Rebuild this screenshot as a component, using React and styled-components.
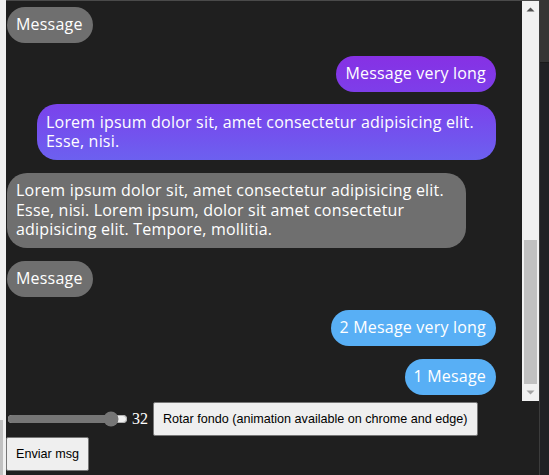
import React, { useState } from "react";
import styled, { createGlobalStyle, css } from "styled-components";

const GlobalStyle = createGlobalStyle`
  html, body { margin: 0; padding: 0; }
  body { background: #f0f0f0; overflow: hidden; }
`;

const Page = styled.div`
  display: flex;
  height: 475px;
  width: 549px;
`;

const LeftGutter = styled.div`
  flex: 0 0 6px;
  background: #f0f0f0;
  display: flex;
  flex-direction: column;
  justify-content: flex-end;
`;

const LeftGutterBar = styled.div`
  width: 3px;
  height: 55px;
  background: #c1c1c1;
`;

const Panel = styled.main`
  flex: 0 0 533px;
  display: flex;
  flex-direction: column;
  background: #1f1f1f;
  border-top: 1px solid #4a4a4a;
  box-sizing: border-box;
`;

const RightGutter = styled.div`
  flex: 1;
  display: flex;
  flex-direction: column;
  background: #202124;
  border-left: 1px solid #3c3c3c;
`;

const RightGutterTop = styled.div`
  height: 62px;
  background: #353535;
  border-bottom: 1px solid #1a1a1a;
`;

const ChatArea = styled.div`
  height: 400px;
  display: flex;
`;

const ChatList = styled.div`
  flex: 1;
  min-width: 0;
  overflow: hidden;
  display: flex;
  flex-direction: column-reverse;
  gap: 12.4px;
  padding: 7px 26px 6px 1px;
  box-sizing: border-box;
`;

const ScrollBar = styled.div`
  flex: 0 0 17px;
  display: flex;
  flex-direction: column;
  background: #f1f1f1;
`;

const ScrollArrow = styled.div`
  height: 17px;
  display: flex;
  align-items: center;
  justify-content: center;
  color: ${(p) => (p.$disabled ? "#a3a3a3" : "#505050")};
`;

const ScrollSpace = styled.div`
  flex: 1;
`;

const ScrollThumb = styled.div`
  height: 144px;
  margin: 0 2px;
  background: #c1c1c1;
`;

const Bubble = styled.div`
  flex: none;
  max-width: 459px;
  box-sizing: border-box;
  padding: 8.5px 10px 8.5px 9px;
  border-radius: 20px;
  font-family: "Open Sans", "Noto Sans", sans-serif;
  font-size: 16px;
  letter-spacing: 0.2px;
  line-height: 19.5px;
  color: #ffffff;
  ${(p) =>
    p.$mine
      ? css`
          align-self: flex-end;
          background: linear-gradient(
            to bottom,
            #8a2be2 40px,
            #7945ec 110px,
            #6b63f0 165px,
            #58aff5 300px
          );
          background-attachment: fixed;
        `
      : css`
          align-self: flex-start;
          background: #6f6f6f;
        `}
`;

const Controls = styled.div`
  display: flex;
  flex-wrap: wrap;
  align-items: center;
  row-gap: 1px;
  padding-top: 1px;
`;

const Slider = styled.input`
  width: 121px;
  margin: 0 0 0 1px;
  accent-color: #767676;
`;

const Value = styled.span`
  margin: 0 5px 0 4px;
  font-family: "Liberation Serif", "Times New Roman", serif;
  font-size: 16px;
  color: #ffffff;
`;

const Button = styled.button`
  font-family: "Liberation Sans", Arial, sans-serif;
  font-size: 12.6px;
  color: #000000;
  background: #efefef;
  border: 1px solid #767676;
  border-radius: 2px;
  padding: 8px 9px;
  line-height: 16px;
  margin: 0;
`;

const Triangle = ({ down }) => (
  <svg width="9" height="5" viewBox="0 0 9 5">
    <path d={down ? "M0.5 0.5 L4.5 4.5 L8.5 0.5 Z" : "M0.5 4.5 L4.5 0.5 L8.5 4.5 Z"} fill="currentColor" />
  </svg>
);

const messages = [
  { mine: false, text: "Message" },
  { mine: true, text: "Message very long" },
  { mine: true, text: "Lorem ipsum dolor sit, amet consectetur adipisicing elit. Esse, nisi." },
  { mine: false, text: "Lorem ipsum dolor sit, amet consectetur adipisicing elit. Esse, nisi. Lorem ipsum, dolor sit amet consectetur adipisicing elit. Tempore, mollitia." },
  { mine: false, text: "Message" },
  { mine: true, text: "2 Mesage very long" },
  { mine: true, text: "1 Mesage" },
];

export default function App() {
  const [angle, setAngle] = useState(32);
  const ordered = [...messages].reverse();
  return (
    <>
      <GlobalStyle />
      <Page>
        <LeftGutter>
          <LeftGutterBar />
        </LeftGutter>
        <Panel>
          <ChatArea>
            <ChatList>
              {ordered.map((m, i) => (
                <Bubble key={i} $mine={m.mine}>
                  {m.text}
                </Bubble>
              ))}
            </ChatList>
            <ScrollBar>
              <ScrollArrow>
                <Triangle />
              </ScrollArrow>
              <ScrollSpace />
              <ScrollThumb />
              <ScrollArrow $disabled>
                <Triangle down />
              </ScrollArrow>
            </ScrollBar>
          </ChatArea>
          <Controls>
            <Slider
              type="range"
              min="0"
              max="35"
              value={angle}
              onChange={(e) => setAngle(Number(e.target.value))}
            />
            <Value>{angle}</Value>
            <Button>Rotar fondo (animation available on chrome and edge)</Button>
            <Button>Enviar msg</Button>
          </Controls>
        </Panel>
        <RightGutter>
          <RightGutterTop />
        </RightGutter>
      </Page>
    </>
  );
}
